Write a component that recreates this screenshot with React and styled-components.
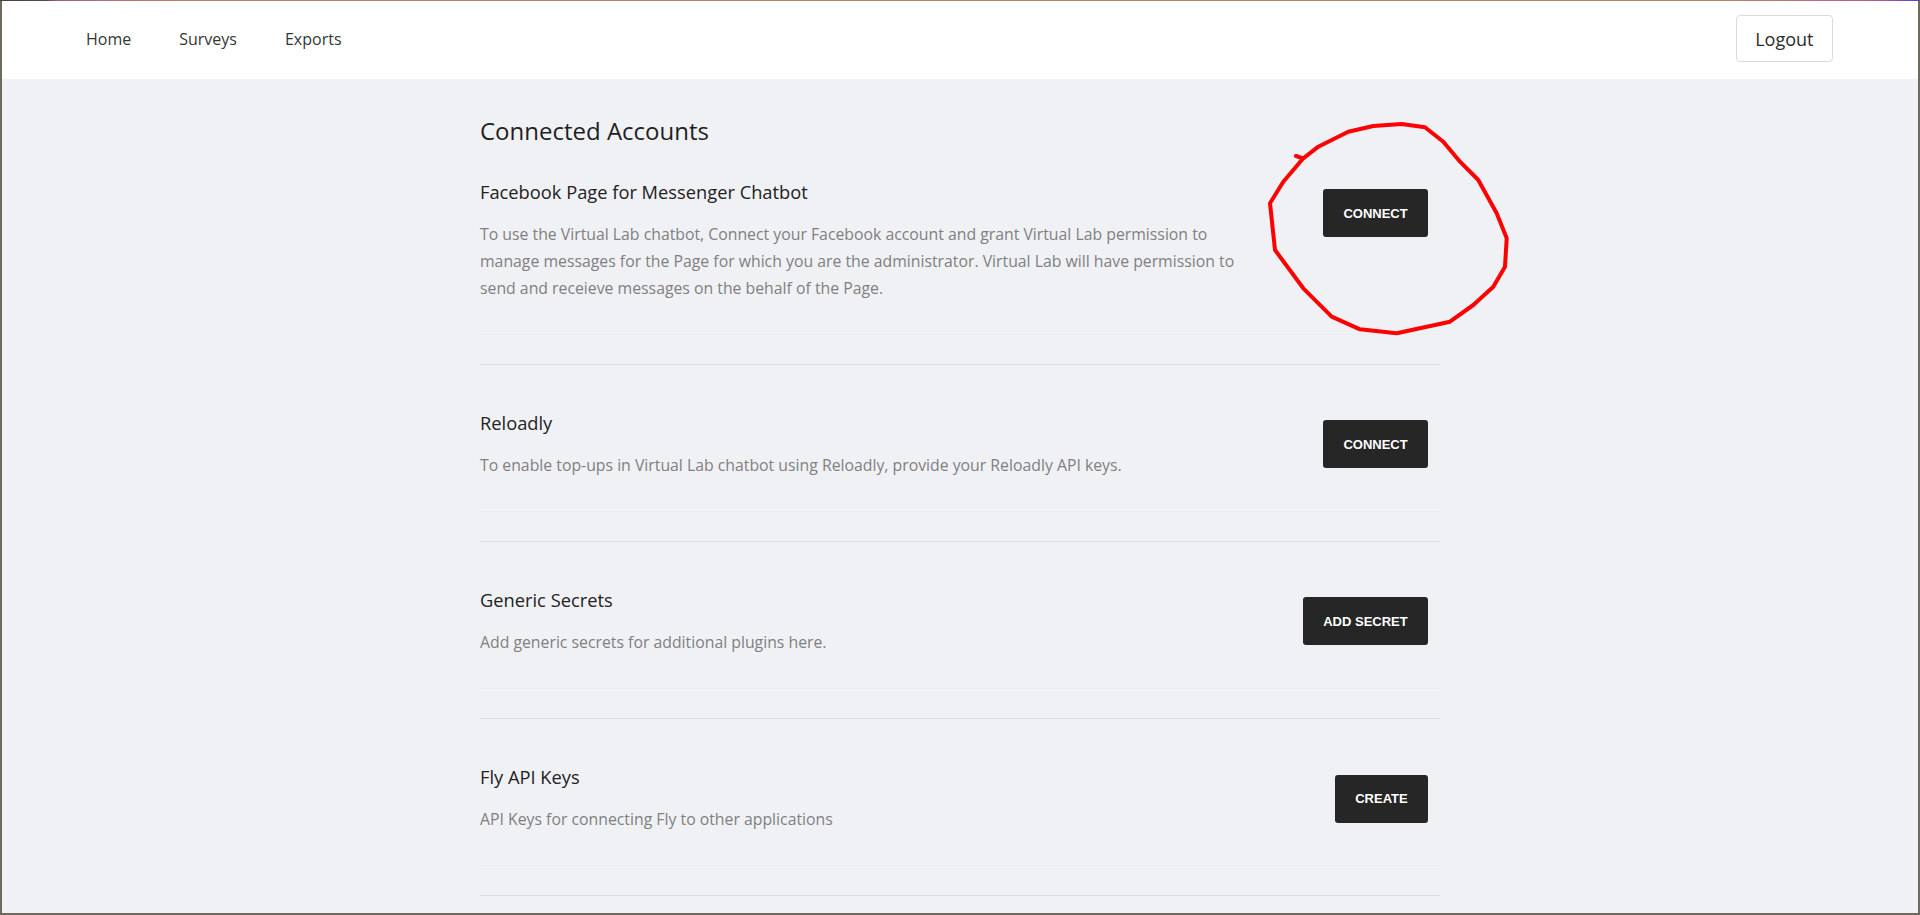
import React from 'react';
import styled, { createGlobalStyle } from 'styled-components';

const GlobalStyle = createGlobalStyle`
  *, *::before, *::after { box-sizing: border-box; }
  html, body { margin: 0; padding: 0; }
  body {
    font-family: "Open Sans", "Noto Sans", sans-serif;
    background: #6e6a5c;
    -webkit-font-smoothing: antialiased;
  }
`;

const Screen = styled.div`
  position: relative;
  height: 915px;
  display: flex;
  flex-direction: column;
  overflow: hidden;
`;

const TopLine = styled.div`
  height: 1px;
  flex-shrink: 0;
  background: linear-gradient(
    90deg,
    #4a3e48 0%,
    #5a4652 2.4%,
    #a0607a 3%,
    #b0707a 5.5%,
    #b8806a 9%,
    #b8826a 90%,
    #bd6a7c 95%,
    #c0508a 98%,
    #6a48c8 99.4%,
    #5a44b0 100%
  );
`;

const Frame = styled.div`
  flex: 1;
  display: flex;
  flex-direction: column;
  border: 2px solid #6e6a5c;
  border-top: none;
  background: #f0f1f5;
  overflow: hidden;
`;

const Navbar = styled.nav`
  height: 78px;
  flex-shrink: 0;
  background: #ffffff;
  display: flex;
  align-items: center;
  justify-content: space-between;
  padding: 0 85px 0 60px;
`;

const NavLinks = styled.div`
  display: flex;
  align-items: center;
`;

const NavLink = styled.a`
  padding: 0 24px;
  font-size: 16px;
  line-height: 1.2;
  color: #363636;
  text-decoration: none;
  cursor: pointer;
`;

const LogoutButton = styled.button`
  height: 47px;
  padding: 0 18.5px;
  margin-bottom: 3px;
  background: #ffffff;
  border: 1px solid #dbdbdb;
  border-radius: 4px;
  font-family: "Open Sans", "Noto Sans", sans-serif;
  font-size: 18px;
  color: #2b2b2b;
  cursor: pointer;
`;

const Main = styled.main`
  flex: 1;
  padding-top: 38px;
`;

const Container = styled.div`
  width: 960px;
  margin: 0 auto;
`;

const PageTitle = styled.h1`
  margin: 0 0 35px;
  font-size: 24px;
  font-weight: 400;
  line-height: 1.2;
  color: #1f1f1f;
`;

const Section = styled.section`
  padding-bottom: 32px;
  border-bottom: 1px solid #eceef2;
`;

const Row = styled.div`
  display: flex;
  align-items: flex-start;
`;

const Info = styled.div`
  width: 775px;
  flex-shrink: 0;
`;

const ItemTitle = styled.h2`
  margin: 0 0 18.5px;
  font-size: 18.3px;
  font-weight: 400;
  line-height: 21.6px;
  color: #222222;
`;

const Description = styled.p`
  margin: 0;
  font-size: 15.8px;
  line-height: 27px;
  color: #808080;
`;

const Action = styled.div`
  flex: 1;
  display: flex;
  justify-content: flex-end;
  padding: 8.5px 12px 0 0;
`;

const DarkButton = styled.button`
  height: 48px;
  padding: 0 20.3px;
  background: #262626;
  color: #ffffff;
  border: none;
  border-radius: 3px;
  font-family: "Liberation Sans", Arial, sans-serif;
  font-size: 13px;
  font-weight: 700;
  text-transform: uppercase;
  cursor: pointer;
`;

const Divider = styled.hr`
  height: 0;
  margin: 29px 0 47px;
  border: 0;
  border-top: 1px solid #dcdee3;
`;

const Annotation = styled.svg`
  position: absolute;
  left: 0;
  top: 0;
  width: 1920px;
  height: 915px;
  pointer-events: none;
`;

const accounts = [
  {
    title: 'Facebook Page for Messenger Chatbot',
    text:
      'To use the Virtual Lab chatbot, Connect your Facebook account and grant Virtual Lab permission to manage messages for the Page for which you are the administrator. Virtual Lab will have permission to send and receieve messages on the behalf of the Page.',
    action: 'Connect',
  },
  {
    title: 'Reloadly',
    text: 'To enable top-ups in Virtual Lab chatbot using Reloadly, provide your Reloadly API keys.',
    action: 'Connect',
  },
  {
    title: 'Generic Secrets',
    text: 'Add generic secrets for additional plugins here.',
    action: 'Add Secret',
  },
  {
    title: 'Fly API Keys',
    text: 'API Keys for connecting Fly to other applications',
    action: 'Create',
  },
];

const circlePoints = [
  [1296, 156],
  [1303.3, 158.3],
  [1318.3, 146.7],
  [1348.3, 131.7],
  [1373.3, 126],
  [1401.7, 124],
  [1425, 127.3],
  [1443.3, 141.7],
  [1460, 161.7],
  [1478.3, 180],
  [1496.7, 213.3],
  [1506.7, 238.3],
  [1505, 266.7],
  [1493.3, 286.7],
  [1473.3, 305],
  [1450, 321.7],
  [1396.7, 333.3],
  [1360, 329.3],
  [1331.7, 316.7],
  [1303.3, 288.3],
  [1275, 250],
  [1270, 203.3],
  [1283.3, 181.7],
  [1303.3, 158.3],
];

export default function App() {
  return (
    <>
      <GlobalStyle />
      <Screen>
        <TopLine />
        <Frame>
          <Navbar>
            <NavLinks>
              <NavLink>Home</NavLink>
              <NavLink>Surveys</NavLink>
              <NavLink>Exports</NavLink>
            </NavLinks>
            <LogoutButton>Logout</LogoutButton>
          </Navbar>
          <Main>
            <Container>
              <PageTitle>Connected Accounts</PageTitle>
              {accounts.map((a) => (
                <React.Fragment key={a.title}>
                  <Section>
                    <Row>
                      <Info>
                        <ItemTitle>{a.title}</ItemTitle>
                        <Description>{a.text}</Description>
                      </Info>
                      <Action>
                        <DarkButton>{a.action}</DarkButton>
                      </Action>
                    </Row>
                  </Section>
                  <Divider />
                </React.Fragment>
              ))}
            </Container>
          </Main>
        </Frame>
        <Annotation viewBox="0 0 1920 915">
          <polyline
            points={circlePoints.map((p) => p.join(',')).join(' ')}
            fill="none"
            stroke="#ff0000"
            strokeWidth="4"
            strokeLinejoin="round"
            strokeLinecap="round"
          />
        </Annotation>
      </Screen>
    </>
  );
}
